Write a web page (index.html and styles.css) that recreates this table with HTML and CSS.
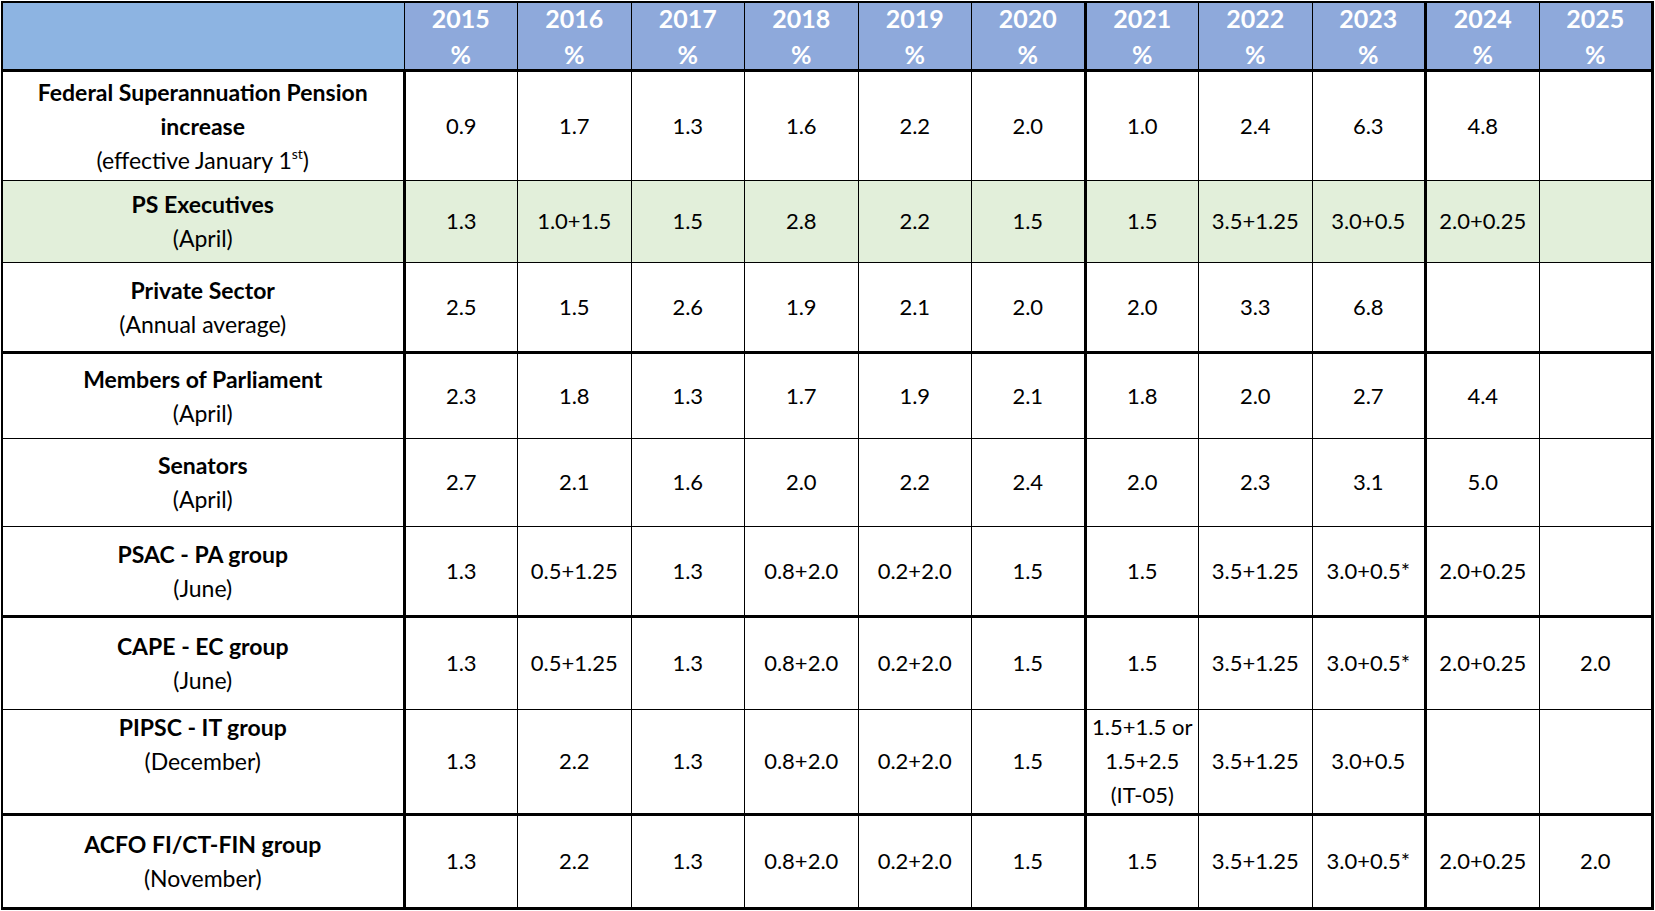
FILE: index.html
```html
<!DOCTYPE html>
<html lang="en">
<head>
<meta charset="utf-8">
<title>Economic increases</title>
<link rel="stylesheet" href="styles.css">
</head>
<body>
<table class="rates">
  <colgroup>
    <col class="c-label">
    <col><col><col><col><col><col><col><col><col><col><col>
  </colgroup>
  <thead>
    <tr class="head">
      <th class="corner"></th>
      <th><div class="hcell"><span class="yr">2015</span><span class="pct">%</span></div></th>
      <th><div class="hcell"><span class="yr">2016</span><span class="pct">%</span></div></th>
      <th><div class="hcell"><span class="yr">2017</span><span class="pct">%</span></div></th>
      <th><div class="hcell"><span class="yr">2018</span><span class="pct">%</span></div></th>
      <th><div class="hcell"><span class="yr">2019</span><span class="pct">%</span></div></th>
      <th><div class="hcell"><span class="yr">2020</span><span class="pct">%</span></div></th>
      <th><div class="hcell"><span class="yr">2021</span><span class="pct">%</span></div></th>
      <th><div class="hcell"><span class="yr">2022</span><span class="pct">%</span></div></th>
      <th><div class="hcell"><span class="yr">2023</span><span class="pct">%</span></div></th>
      <th><div class="hcell"><span class="yr">2024</span><span class="pct">%</span></div></th>
      <th><div class="hcell"><span class="yr">2025</span><span class="pct">%</span></div></th>
    </tr>
  </thead>
  <tbody>
    <tr class="row r-fed">
      <th class="lab"><b>Federal Superannuation Pension<br>increase</b><br>(effective January 1<sup>st</sup>)</th>
      <td>0.9</td><td>1.7</td><td>1.3</td><td>1.6</td><td>2.2</td><td>2.0</td><td>1.0</td><td>2.4</td><td>6.3</td><td>4.8</td><td></td>
    </tr>
    <tr class="row r-exec green">
      <th class="lab"><b>PS Executives</b><br>(April)</th>
      <td>1.3</td><td>1.0+1.5</td><td>1.5</td><td>2.8</td><td>2.2</td><td>1.5</td><td>1.5</td><td>3.5+1.25</td><td>3.0+0.5</td><td>2.0+0.25</td><td></td>
    </tr>
    <tr class="row r-priv">
      <th class="lab"><b>Private Sector</b><br>(Annual average)</th>
      <td>2.5</td><td>1.5</td><td>2.6</td><td>1.9</td><td>2.1</td><td>2.0</td><td>2.0</td><td>3.3</td><td>6.8</td><td></td><td></td>
    </tr>
    <tr class="row r-mp thick-top">
      <th class="lab"><b>Members of Parliament</b><br>(April)</th>
      <td>2.3</td><td>1.8</td><td>1.3</td><td>1.7</td><td>1.9</td><td>2.1</td><td>1.8</td><td>2.0</td><td>2.7</td><td>4.4</td><td></td>
    </tr>
    <tr class="row r-sen">
      <th class="lab"><b>Senators</b><br>(April)</th>
      <td>2.7</td><td>2.1</td><td>1.6</td><td>2.0</td><td>2.2</td><td>2.4</td><td>2.0</td><td>2.3</td><td>3.1</td><td>5.0</td><td></td>
    </tr>
    <tr class="row r-psac">
      <th class="lab"><b>PSAC - PA group</b><br>(June)</th>
      <td>1.3</td><td>0.5+1.25</td><td>1.3</td><td>0.8+2.0</td><td>0.2+2.0</td><td>1.5</td><td>1.5</td><td>3.5+1.25</td><td>3.0+0.5*</td><td>2.0+0.25</td><td></td>
    </tr>
    <tr class="row r-cape thick-top">
      <th class="lab"><b>CAPE - EC group</b><br>(June)</th>
      <td>1.3</td><td>0.5+1.25</td><td>1.3</td><td>0.8+2.0</td><td>0.2+2.0</td><td>1.5</td><td>1.5</td><td>3.5+1.25</td><td>3.0+0.5*</td><td>2.0+0.25</td><td>2.0</td>
    </tr>
    <tr class="row r-pipsc">
      <th class="lab"><b>PIPSC - IT group</b><br>(December)<br>&nbsp;</th>
      <td>1.3</td><td>2.2</td><td>1.3</td><td>0.8+2.0</td><td>0.2+2.0</td><td>1.5</td><td>1.5+1.5 or<br>1.5+2.5<br>(IT-05)</td><td>3.5+1.25</td><td>3.0+0.5</td><td></td><td></td>
    </tr>
    <tr class="row r-acfo thick-top">
      <th class="lab"><b>ACFO FI/CT-FIN group</b><br>(November)</th>
      <td>1.3</td><td>2.2</td><td>1.3</td><td>0.8+2.0</td><td>0.2+2.0</td><td>1.5</td><td>1.5</td><td>3.5+1.25</td><td>3.0+0.5*</td><td>2.0+0.25</td><td>2.0</td>
    </tr>
  </tbody>
</table>
</body>
</html>
```

FILE: styles.css
```css
html, body {
  margin: 0;
  padding: 0;
  background: #ffffff;
}

body {
  font-family: Lato, "Open Sans", "Liberation Sans", sans-serif;
  color: #000000;
}

.rates {
  border-collapse: collapse;
  table-layout: fixed;
  width: 1653px;
  margin: 1px 0 0 1px;
  border-top: 2px solid #000;
  border-left: 2px solid #000;
  border-right: 3px solid #000;
  border-bottom: 3px solid #000;
}

.c-label {
  width: 402px;
}

.rates th,
.rates td {
  border: 1px solid #000;
  padding: 0;
  text-align: center;
  vertical-align: middle;
  font-size: 22px;
  line-height: 34px;
  font-weight: 400;
}

/* header */
.head {
  height: 68px;
}

.head th {
  background: #8ea9db;
  color: #ffffff;
  font-weight: 700;
  font-size: 25px;
  vertical-align: top;
  border-bottom: 3px solid #000;
}

.head th.corner {
  background: #8db4e2;
}

.hcell {
  display: flex;
  flex-direction: column;
  align-items: center;
}

.yr {
  line-height: 30px;
}

.pct {
  line-height: 26px;
  margin-top: 8px;
}

/* label column */
.rates .lab {
  border-right: 3px solid #000;
  font-size: 23px;
  font-weight: 400;
}

.lab b {
  font-weight: 700;
}

.lab sup {
  font-size: 14px;
  line-height: 0;
  vertical-align: 10px;
}

/* thick vertical dividers: before 2021 and before 2024 */
.rates td:nth-child(8),
.head th:nth-child(8),
.rates td:nth-child(11),
.head th:nth-child(11) {
  border-left: 3px solid #000;
}

.thick-top th,
.thick-top td {
  border-top: 3px solid #000;
}

.green th,
.green td {
  background: #e2efda;
}

/* row heights */
.r-fed { height: 110px; }
.r-exec { height: 82px; }
.r-priv { height: 90px; }
.r-mp { height: 86px; }
.r-sen { height: 88px; }
.r-psac { height: 90px; }
.r-cape { height: 93px; }
.r-pipsc { height: 105px; }
.r-acfo { height: 94px; }
```
